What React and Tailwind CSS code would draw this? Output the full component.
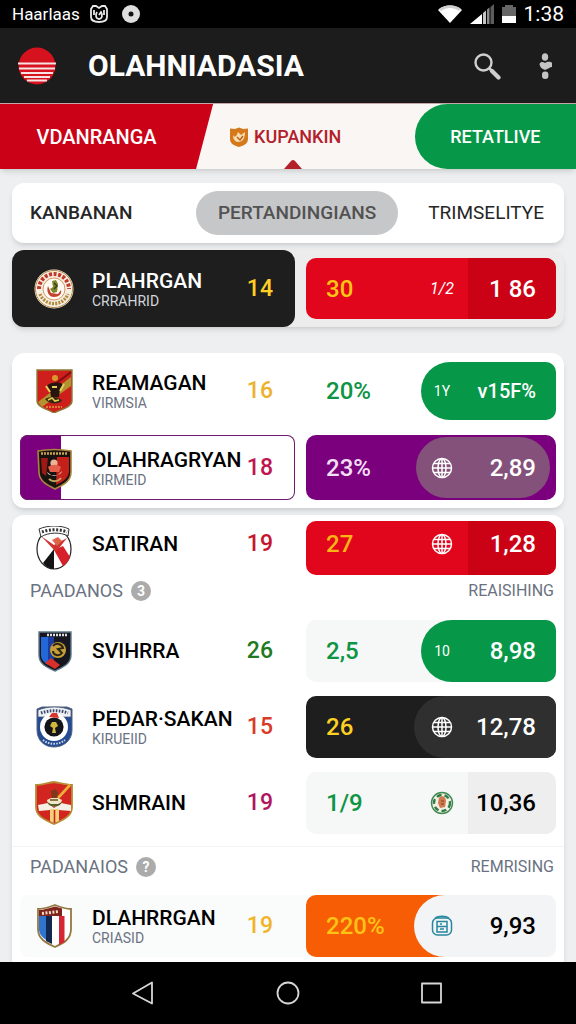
import React, { Component } from 'react';
import clsx from 'clsx';

const CrestPlahrgan = () => (
  <svg viewBox="0 0 40 44" className="w-10 h-11 shrink-0">
    <circle cx="20" cy="22" r="19.5" fill="#f6efe2" />
    <circle cx="20" cy="22" r="18.6" fill="none" stroke="#b98a4a" strokeWidth="1" />
    <path d="M5 22 A15 15 0 0 1 35 22" fill="none" stroke="#c0392b" strokeWidth="4" strokeDasharray="3 1.6" />
    <path d="M6 27 A15 15 0 0 0 34 27" fill="none" stroke="#b08a3c" strokeWidth="3.4" strokeDasharray="2 1.2" />
    <circle cx="20" cy="22" r="11" fill="#fffaf3" stroke="#c9803f" strokeWidth="0.8" />
    <path d="M14 19 C12 25 15 30 20 30 C25 30 28 27 27 23 L24 27 L17 26 Z" fill="#c4432f" />
    <path d="M18 14 l4 -1 l2 4 l-1 8 l-4 1 l-3 -4 l3 -2 Z" fill="#7a8a2b" />
    <path d="M20 16 l3 3 l-3 3" fill="none" stroke="#3d3a14" strokeWidth="1.4" />
  </svg>
)

const CrestReamagan = () => (
  <svg viewBox="0 0 40 44" className="w-10 h-11 shrink-0">
    <path d="M3 1 H38 V32 C38 38 28 40 20 44 C13 40 3 38 3 32 Z" fill="#cf1f1c" stroke="#8f7a35" strokeWidth="1.4" />
    <path d="M37 8 L37 17 L8 38 L4 33 Z" fill="#b3922f" />
    <path d="M37 3 L20 16" stroke="#7d0f10" strokeWidth="2" />
    <circle cx="21" cy="9" r="3" fill="#d99a2b" />
    <path d="M13 17 C15 13 27 12 29 16 L26 20 L25 28 H17 L16 21 Z" fill="#26160e" />
    <path d="M12 17 l4 6 M30 15 l-4 7 M18 18 h5" stroke="#e8cf58" strokeWidth="2" />
    <path d="M11 30 C16 27 25 27 28 32 C23 36 15 35 11 30 Z" fill="#332a10" />
    <path d="M14 31 l4 -2 l3 3 l4 -1" fill="none" stroke="#e5cb4f" strokeWidth="1.6" />
    <path d="M12 38 H28" stroke="#e2a13c" strokeWidth="1.6" strokeDasharray="2 1" />
  </svg>
)

const CrestOlahragryan = () => (
  <svg viewBox="0 0 40 44" className="w-10 h-11 shrink-0">
    <path d="M4 5 C14 3 26 3 37 5 V26 C37 36 28 39 21 43 C13 39 5 35 5 26 Z" fill="#171310" stroke="#a8833a" strokeWidth="1.6" />
    <path d="M23 11 H35 V26 C34 33 28 36 22 39 Z" fill="#c3201a" />
    <path d="M7 12 L14 12 L12 30 L8 27 Z" fill="#9c1915" />
    <path d="M7 7.5 H34" stroke="#c9a252" strokeWidth="2.6" strokeDasharray="2 1" />
    <circle cx="20" cy="17" r="3.6" fill="#ecb396" />
    <path d="M14 21 C18 18 23 18 27 21 L25 26 L16 26 Z" fill="#e4604a" />
    <path d="M13 26 C14 31 27 31 28 25 L24 29 H17 Z" fill="#f0e1c6" />
    <path d="M15 33 C18 36 24 36 27 32" fill="none" stroke="#c4a060" strokeWidth="2" />
  </svg>
)

const CrestSatiran = () => (
  <svg viewBox="0 0 40 44" className="w-10 h-11 shrink-0">
    <ellipse cx="20" cy="23" rx="17" ry="20" fill="#fff" stroke="#222" strokeWidth="1.2" />
    <path d="M20 23 L9 37 C12 41 16 43 20 43 Z" fill="#141414" />
    <path d="M20 24 L29 20 L36 31 C34 36 32 38 29 40 Z" fill="#d6202a" />
    <path d="M7 10 L22 26 L33 12 L20 19 Z" fill="#cf3530" />
    <path d="M18 14 l6 -3 l4 4 l-5 5 Z" fill="#e0634a" />
    <path d="M5 3 C14 -1 27 -1 35 3 L34 10 C27 6 14 6 7 11 Z" fill="#fff" stroke="#333" strokeWidth="1" />
    <path d="M8 6 C15 3 26 3 33 6" fill="none" stroke="#333" strokeWidth="3" strokeDasharray="2 1.6" />
  </svg>
)

const CrestSvihrra = () => (
  <svg viewBox="0 0 40 44" className="w-10 h-11 shrink-0">
    <path d="M5 3 H37 V26 C37 35 29 38 21 42 C12 38 5 35 5 26 Z" fill="#15161f" stroke="#5f7a87" strokeWidth="1.4" />
    <path d="M7 8 H14 V36 C10 33 7 31 7 26 Z" fill="#2467d8" />
    <path d="M14 8 H20 V38 L14 35 Z" fill="#1a3da0" />
    <path d="M13 6 H33" stroke="#d9dde4" strokeWidth="2.4" strokeDasharray="2 1" />
    <circle cx="24" cy="21" r="8" fill="#c79f38" />
    <path d="M19 17 C22 13 28 15 29 19 L24 20 L28 24 C25 28 19 26 19 22" fill="none" stroke="#2a2412" strokeWidth="2" />
    <path d="M11 34 L17 29 L26 36 L21 40 Z" fill="#d8312b" />
  </svg>
)

const CrestPedar = () => (
  <svg viewBox="0 0 40 44" className="w-10 h-11 shrink-0">
    <path d="M3 4 L8 2 H33 L38 4 V25 C38 36 29 42 20 42 C11 42 3 36 3 25 Z" fill="#234a93" stroke="#55657f" strokeWidth="1" />
    <path d="M4 5 C14 1 27 1 37 5 V12 H4 Z" fill="#eef0f3" stroke="#4b5871" strokeWidth="0.8" />
    <path d="M7 8 C15 5 26 5 34 8" fill="none" stroke="#394a6b" strokeWidth="3" strokeDasharray="1.6 1.4" />
    <circle cx="20" cy="22" r="14" fill="#fff" />
    <circle cx="20" cy="22" r="9.6" fill="#14151a" />
    <path d="M15 12 L18 8 H23 L25 13 Z" fill="#d9342d" />
    <path d="M18 17 h4 l2 4 l-3 2 l1 5 h-4 l1 -5 l-3 -2 Z" fill="#d2b73e" />
    <path d="M9 35 C15 40 25 40 31 35" fill="none" stroke="#cdd6e6" strokeWidth="2" strokeDasharray="1.6 1.2" />
  </svg>
)

const CrestShmrain = () => (
  <svg viewBox="0 0 40 44" className="w-10 h-11 shrink-0">
    <path d="M2 4 C8 4 13 2 20 1 C26 2 32 4 38 4 V26 C38 36 28 39 20 43 C12 39 2 36 2 26 Z" fill="#d3251f" stroke="#b88a35" strokeWidth="1.8" />
    <path d="M4 24 L14 22 L20 27 L27 22 L37 24 V30 L24 29 H16 L5 30 Z" fill="#f6efe6" />
    <path d="M16 28 H25 V40 L20 42 L16 40 Z" fill="#f3d27a" />
    <path d="M20.5 29 V42" stroke="#d3251f" strokeWidth="1.6" />
    <path d="M36 4 L24 17" stroke="#e9b13b" strokeWidth="2.6" />
    <path d="M17 10 l4 -2 l3 3 l-1 6 h-5 Z" fill="#7d3a1a" />
    <path d="M13 19 C14 27 26 28 28 19 L24 17 H17 Z" fill="#f1e6c8" />
    <path d="M13 21 C15 27 26 27 28 21 L24 23 H17 Z" fill="#54602b" />
    <path d="M16 19 h8" stroke="#6b5a22" strokeWidth="1.6" />
  </svg>
)

const CrestDlahrrgan = () => (
  <svg viewBox="0 0 40 44" className="w-10 h-11 shrink-0">
    <path d="M4 5 C10 5 15 3 21 1 C26 3 32 5 37 5 V25 C37 35 30 39 21 43 C12 39 4 35 4 25 Z" fill="#fff" stroke="#93783f" strokeWidth="1.8" />
    <path d="M5 12 H12 V36 C8 33 5 30 5 25 Z" fill="#2f74cf" />
    <path d="M12 12 H18 V40 L12 37 Z" fill="#14284f" />
    <path d="M25 12 H30.5 V38 L25 41 Z" fill="#d52634" />
    <path d="M5 6 C10 6 15 4 21 2.500 L28 4.500 V12 H5 Z" fill="#7e241d" />
    <path d="M8 9.500 L25 7.500" stroke="#f0dcc4" strokeWidth="3" strokeDasharray="2 1.5" />
  </svg>
)

const GlobeIcon = () => (
  <svg viewBox="0 0 22 22" className="w-[22px] h-[22px]" fill="none" stroke="currentColor" strokeWidth="1.5">
    <circle cx="11" cy="11" r="9.5" />
    <ellipse cx="11" cy="11" rx="4" ry="9.5" />
    <path d="M11 1 V21 M1.500 11 H20.500 M3 6.500 H19 M3 15.500 H19" />
  </svg>
)

const BadgeIcon = () => (
  <svg viewBox="0 0 24 24" className="w-6 h-6">
    <circle cx="12" cy="12" r="10.5" fill="#f3efe3" stroke="#3f8a52" strokeWidth="1.4" />
    <circle cx="12" cy="12" r="8" fill="none" stroke="#2f7d46" strokeWidth="2.4" strokeDasharray="5 3" />
    <path d="M9 7 C11 4 16 5 16 10 L15 16 L10 17 L8 12 Z" fill="#d0794f" />
    <path d="M11 10 h3 M11 13 h3" stroke="#8d3f22" strokeWidth="1" />
  </svg>
)

const BoxIcon = () => (
  <svg viewBox="0 0 22 22" className="w-[22px] h-[22px]" fill="none" stroke="#2787a0" strokeWidth="1.5">
    <rect x="1.5" y="3" width="19" height="17" rx="5" />
    <path d="M4 3 C7 0.500 15 0.500 18 3 M6 17 V6.500 H16 V17 Z M6 11.500 H16 M9 9 H11 M9 14 H13" />
  </svg>
)

const featured = [
  {
    id: 1, name: 'PLAHRGAN', sub: 'CRRAHRID', crest: CrestPlahrgan, points: 14,
    teamStyle: '-ml-2 pl-[22px] h-[77px] rounded-xl bg-[#1e1e1e] text-white', subStyle: 'text-gray-300', pointStyle: 'text-[#fdd023]',
    rate: '30', rateStyle: 'text-[#fdc414]', resultStyle: 'h-[61px] bg-[#e2061c]',
    mark: '1/2', markStyle: 'text-base italic', score: '1 86', sideStyle: 'w-[54%] text-white', scoreStyle: 'text-2xl bg-[#cb0216]'
  },
]

const leaders = [
  {
    id: 2, name: 'REAMAGAN', sub: 'VIRMSIA', crest: CrestReamagan, points: 16,
    teamStyle: 'h-[58px]', subStyle: 'text-gray-500', pointStyle: 'text-[#ecb22e]',
    rate: '20%', rateStyle: 'text-[#0d9444]', resultStyle: 'h-[58px]',
    mark: '1Y', markStyle: 'text-sm', score: 'v15F%', sideStyle: 'w-[54%] rounded-l-full bg-[#069748] text-white', scoreStyle: 'text-xl'
  },
  {
    id: 3, name: 'OLAHRAGRYAN', sub: 'KIRMEID', crest: CrestOlahragryan, points: 18, floating: true,
    teamStyle: 'h-[65px] rounded-lg inset-ring inset-ring-[#6d1a6c] bg-[linear-gradient(to_right,#7a007e_41px,#fff_41px)]', subStyle: 'text-gray-500', pointStyle: 'text-[#bf1450]',
    rate: '23%', rateStyle: 'text-[#f3dff3]', resultStyle: 'h-[65px] bg-[#7a007e] py-[2px] pr-[6px]',
    mark: <GlobeIcon />, markStyle: '', score: '2,89', sideStyle: 'w-[55%] rounded-full bg-[#84517a] text-white', scoreStyle: 'text-2xl'
  },
]

const standings = [
  {
    id: 4, name: 'SATIRAN', crest: CrestSatiran, points: 19, compact: true,
    teamStyle: 'h-[54px]', pointStyle: 'text-[#c8152c]',
    rate: '27', rateStyle: 'text-[#fdb515]', resultStyle: 'h-[54px] bg-[#e2061c]',
    mark: <GlobeIcon />, markStyle: '', score: '1,28', sideStyle: 'w-[54%] text-white', scoreStyle: 'text-2xl bg-[#cb0216]'
  },
]

const secondGroup = [
  {
    id: 5, name: 'SVIHRRA', crest: CrestSvihrra, points: 26,
    teamStyle: 'h-[62px]', pointStyle: 'text-[#1f7a1f]',
    rate: '2,5', rateStyle: 'text-[#0d9444]', resultStyle: 'h-[62px] bg-[#f6f8f8]',
    mark: '10', markStyle: 'text-sm', score: '8,98', sideStyle: 'w-[54%] rounded-l-full bg-[#069748] text-white', scoreStyle: 'text-2xl'
  },
  {
    id: 6, name: 'PEDAR·SAKAN', sub: 'KIRUEIID', crest: CrestPedar, points: 15,
    teamStyle: 'h-[62px]', subStyle: 'text-gray-500', pointStyle: 'text-[#d83a26]',
    rate: '26', rateStyle: 'text-[#fdd023]', resultStyle: 'h-[62px] bg-[#1e1e1e]',
    mark: <GlobeIcon />, markStyle: '', score: '12,78', sideStyle: 'w-[57%] rounded-l-full bg-[#2f2f2f] text-white', scoreStyle: 'text-2xl'
  },
  {
    id: 7, name: 'SHMRAIN', crest: CrestShmrain, points: 19,
    teamStyle: 'h-[62px]', pointStyle: 'text-[#b01560]',
    rate: '1/9', rateStyle: 'text-[#0d9444]', resultStyle: 'h-[62px] bg-[#f6f7f7]',
    mark: <BadgeIcon />, markStyle: '', score: '10,36', sideStyle: 'w-[57%] text-black', scoreStyle: 'text-2xl bg-[#eeeeee]'
  },
]

const thirdGroup = [
  {
    id: 8, name: 'DLAHRRGAN', sub: 'CRIASID', crest: CrestDlahrrgan, points: 19,
    teamStyle: 'h-[62px]', subStyle: 'text-gray-500', pointStyle: 'text-[#f0b429]',
    rate: '220%', rateStyle: 'text-[#fdc414]', resultStyle: 'h-[62px] bg-[linear-gradient(to_right,#f65d04_80%,#f3f4f5_80%)]',
    mark: <BoxIcon />, markStyle: '', score: '9,93', sideStyle: 'w-[57%] rounded-l-full bg-[#f3f4f5] text-black', scoreStyle: 'text-2xl'
  },
]

const filters = ['KANBANAN', 'PERTANDINGIANS', 'TRIMSELITYE'];

class App extends Component {
  constructor() {
    super();

    this.state = {
      filter: filters[1]
    }
  }

  renderRow = (row) => {
    const Crest = row.crest;
    return (
      <li key={row.id} className="grid grid-cols-[11fr_10fr] gap-[11px] items-center">
        <div className={clsx('min-w-0 flex items-center pl-[14px] pr-[22px]', row.teamStyle)}>
          <Crest />
          <div className={clsx('ml-[18px] flex-1 min-w-0 whitespace-nowrap', row.compact && 'pb-2')}>
            <div className="text-[21px] leading-6 font-medium">{row.name}</div>
            {row.sub && <div className={clsx('text-sm leading-4', row.subStyle)}>{row.sub}</div>}
          </div>
          <div className={clsx('text-[23px] leading-6 font-medium', row.pointStyle, row.compact && 'pb-2')}>{row.points}</div>
        </div>
        <div className={clsx('min-w-0 flex rounded-[10px] overflow-hidden', row.resultStyle)}>
          <div className={clsx('flex-1 min-w-0 flex items-center pl-5 text-2xl font-medium', row.rateStyle, row.compact && 'pb-2')}>
            {row.rate}
          </div>
          <div className={clsx('shrink-0 flex justify-end', row.sideStyle)}>
            <div className={clsx('w-11 mr-1 shrink-0 flex items-center justify-center', row.markStyle, row.compact && 'pb-2')}>
              {row.mark}
            </div>
            <div
              className={clsx(
                'shrink-0 flex items-center justify-end font-medium',
                row.floating ? 'w-[82px] pr-[14px]' : 'w-[88px] pr-5',
                row.scoreStyle,
                row.compact && 'pb-2'
              )}
            >
              {row.score}
            </div>
          </div>
        </div>
      </li>
    )
  }

  renderGroupTitle = (title, badge, right) => {
    return (
      <div className="flex items-center h-8 pl-[10px] pr-[2px]">
        <h2 className="text-lg text-gray-500">{title}</h2>
        <span className="ml-2 w-5 h-5 rounded-full bg-[#ababab] text-white text-sm font-bold flex items-center justify-center">{badge}</span>
        <span className="ml-auto text-base text-gray-500">{right}</span>
      </div>
    )
  }

  renderStatusBar = () => {
    return (
      <div className="h-7 px-3 bg-black text-white flex items-center">
        <span className="text-[17px] leading-6">Haarlaas</span>
        <svg viewBox="0 0 18 18" className="ml-[10px] w-[18px] h-[18px]" fill="none" stroke="#e8e8e8" strokeWidth="1.8">
          <path d="M3 1 H6 L9 3 L12 1 H15 L17 4 V12 C17 15 14 17 9 17 C4 17 1 15 1 12 V4 Z" />
          <path d="M4 5 V10 M7 7 C5 10 6 14 9 14 C12 14 13 10 11 7 L9 10 M14 5 V10" />
        </svg>
        <svg viewBox="0 0 18 18" className="ml-[14px] w-[18px] h-[18px]">
          <circle cx="9" cy="9" r="9" fill="#dedede" />
          <circle cx="9" cy="9" r="2.5" fill="#111" />
        </svg>
        <svg viewBox="0 0 24 18" className="ml-auto w-6 h-[18px]">
          <path d="M0 5 C6 -1 18 -1 24 5 L12 18 Z" fill="#fff" />
          <path d="M1 4 C7 -1 17 -1 23 4 L21 6 C15 2 9 2 3 6 Z" fill="#cfcfcf" />
        </svg>
        <svg viewBox="0 0 24 20" className="ml-2 w-6 h-5">
          <path d="M0 20 L12 10 V20 Z" fill="#fff" />
          <path d="M13 9 L16 6.500 V20 H13 Z" fill="#c4c4c4" />
          <path d="M17 5.500 L19.500 3.500 V20 H17 Z" fill="#8c8c8c" />
          <path d="M20.500 3 L24 0 V20 H20.500 Z" fill="#5c5c5c" />
        </svg>
        <svg viewBox="0 0 14 18" className="ml-2 w-[14px] h-[18px]">
          <path d="M0 2 H3 V0 H11 V2 H14 V12 H0 Z" fill="#666" />
          <path d="M0 11 H14 V18 H0 Z" fill="#fff" />
        </svg>
        <span className="ml-2 text-[21px] leading-6">1:38</span>
      </div>
    )
  }

  renderHeader = () => {
    return (
      <header className="h-[75px] pl-[18px] pr-6 bg-[#1c1c1c] text-white flex items-center">
        <svg viewBox="0 0 38 38" className="w-[38px] h-[38px]">
          <circle cx="19" cy="19" r="18.5" fill="#d5121d" />
          <path d="M0 16.500 H38 M1 21.500 H37 M3 26 H35 M6 30 H32 M9 33.500 H29" stroke="#f6e4e4" strokeWidth="1.8" />
        </svg>
        <h1 className="ml-8 flex-1 text-[30px] leading-9 font-bold">OLAHNIADASIA</h1>
        <button type="button" aria-label="Search">
          <svg viewBox="0 0 28 28" className="w-7 h-7" fill="none" stroke="#cfcfcf">
            <circle cx="10.5" cy="10.5" r="8" strokeWidth="2.4" />
            <path d="M16 16 L19 19" strokeWidth="2.6" />
            <path d="M19 19 L25.500 25.500" strokeWidth="4.2" strokeLinecap="round" />
          </svg>
        </button>
        <button type="button" aria-label="Menu" className="ml-[37px]">
          <svg viewBox="0 0 14 28" className="w-[14px] h-7" fill="#c4c4c4">
            <ellipse cx="7" cy="5" rx="3.2" ry="3.8" />
            <path d="M1.500 12 C3 9 5 10 7 11 C9 10 12 9 14 11 V15 C12 15 10 17 7 18 C5 17 2 16 1.500 12 Z" />
            <rect x="4" y="19.5" width="6.4" height="7.5" rx="3" />
          </svg>
        </button>
      </header>
    )
  }

  renderTabs = () => {
    return (
      <nav className="h-[66px] flex bg-[#f9f6f3] text-lg font-medium border-t border-[#c8a5a5] shadow-md">
        <button type="button" className="w-[37%] pr-5 bg-[#cb0217] text-xl text-white [clip-path:polygon(0_0,100%_0,92%_100%,0_100%)]">
          VDANRANGA
        </button>
        <button type="button" className="relative flex-1 pl-4 flex items-center text-[#b3202a]">
          <svg viewBox="0 0 20 20" className="w-5 h-5 mr-[5px]">
            <path d="M1 1.500 L6 2 L10 0.500 L14 2 L19 1.500 V12 C19 17 14 19 10 20 C6 19 1 17 1 12 Z" fill="#d5791d" />
            <path d="M4 8 C6 12 8 8 9 5 L12 8 L16 5 C16 11 14 15 9 15 C6 15 4 12 4 8 Z" fill="#f6dcae" />
            <path d="M8 10 L11 13 L14 9" fill="none" stroke="#b95f12" strokeWidth="1.4" />
          </svg>
          KUPANKIN
          <svg viewBox="0 0 18 9" className="absolute bottom-0 left-[71px] w-[18px] h-[9px]">
            <path d="M0 9 L7 1 Q9 -1 11 1 L18 9 Z" fill="#b3202a" />
          </svg>
        </button>
        <button type="button" className="w-[28%] rounded-l-full bg-[#069748] text-white">RETATLIVE</button>
      </nav>
    )
  }

  renderFilters = () => {
    return (
      <div className="h-[60px] pl-[18px] pr-5 rounded-xl bg-white shadow-md flex items-center text-[19px]">
        {filters.map((filter, i) => (
          <button
            type="button"
            key={filter}
            onClick={() => this.setState({ filter })}
            className={clsx(
              i === 0 && 'mr-auto font-medium',
              i === 2 && 'ml-[30px]',
              filter === this.state.filter
                ? 'h-11 px-[22px] rounded-full bg-[#c6c7c9] text-neutral-600 font-medium'
                : 'text-neutral-800'
            )}
          >
            {filter}
          </button>
        ))}
      </div>
    )
  }

  renderSystemNav = () => {
    return (
      <footer className="h-[62px] bg-black flex items-center justify-center gap-[120px]">
        <button type="button" aria-label="Back">
          <svg viewBox="0 0 24 24" className="w-6 h-6" fill="none" stroke="#d6d6d6" strokeWidth="1.8" strokeLinejoin="round">
            <path d="M20 1.500 V22.500 L1 12.500 Z" />
          </svg>
        </button>
        <button type="button" aria-label="Home">
          <svg viewBox="0 0 24 24" className="w-6 h-6" fill="none" stroke="#d6d6d6" strokeWidth="1.8">
            <circle cx="12" cy="12" r="10.5" />
          </svg>
        </button>
        <button type="button" aria-label="Recent apps">
          <svg viewBox="0 0 24 24" className="w-6 h-6" fill="none" stroke="#d6d6d6" strokeWidth="1.8" strokeLinejoin="round">
            <rect x="2" y="2.5" width="19" height="19" />
          </svg>
        </button>
      </footer>
    )
  }

  render() {
    return (
      <div className="min-h-screen flex flex-col bg-[#eeeff0] text-black font-['Roboto',sans-serif]">
        {this.renderStatusBar()}
        {this.renderHeader()}
        {this.renderTabs()}
        <main className="flex-1 flex flex-col px-3 pt-[14px]">
          {this.renderFilters()}
          <ul className="mt-[7px] px-2 rounded-xl bg-[#ececed] shadow-md">
            {featured.map(this.renderRow)}
          </ul>
          <ul className="mt-[26px] px-2 pt-[9px] pb-2 rounded-xl bg-white shadow-md flex flex-col gap-[15px]">
            {leaders.map(this.renderRow)}
          </ul>
          <section className="mt-[7px] px-2 pt-[6px] pb-[5px] flex-1 rounded-t-xl bg-white shadow-md">
            <ul>{standings.map(this.renderRow)}</ul>
            {this.renderGroupTitle('PAADANOS', '3', 'REAISIHING')}
            <ul className="mt-[13px] flex flex-col gap-[14px]">
              {secondGroup.map(this.renderRow)}
            </ul>
            <div className="-mx-2 mt-3 px-2 pt-1 border-t border-gray-100">
              {this.renderGroupTitle('PADANAIOS', '?', 'REMRISING')}
            </div>
            <ul className="mt-3 rounded-lg bg-[#fafbfb]">{thirdGroup.map(this.renderRow)}</ul>
          </section>
        </main>
        {this.renderSystemNav()}
      </div>
    )
  }
}

export default App
